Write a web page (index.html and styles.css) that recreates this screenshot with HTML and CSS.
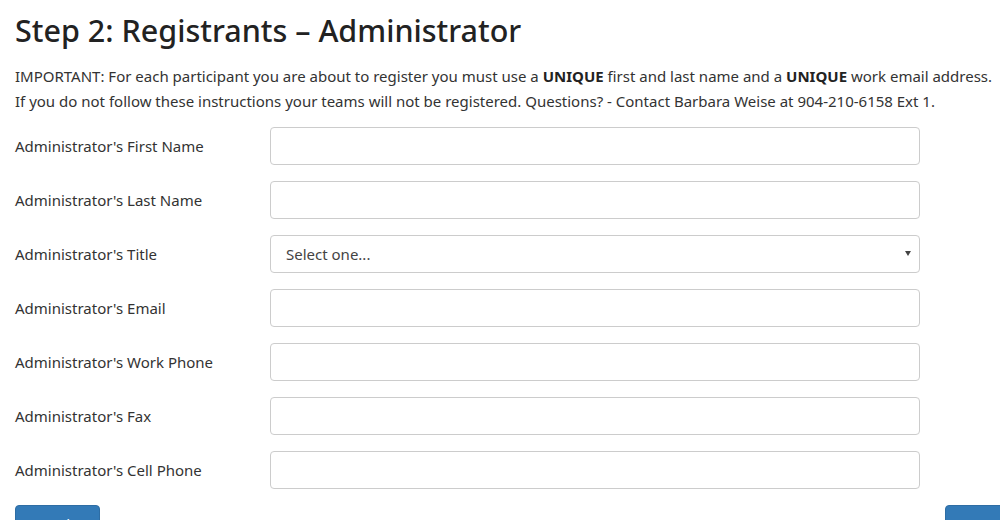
FILE: index.html
```html
<!DOCTYPE html>
<html>
<head>
<meta charset="utf-8">
<link rel="stylesheet" href="styles.css">
</head>
<body>
<div class="page">
  <h1 class="title">Step 2: Registrants – Administrator</h1>
  <p class="notice">IMPORTANT: For each participant you are about to register you must use a <b>UNIQUE</b> first and last name and a <b>UNIQUE</b> work email address. If you do not follow these instructions your teams will not be registered. Questions? - Contact Barbara Weise at 904-210-6158 Ext 1.</p>
  <form class="form">
    <div class="row"><label class="label">Administrator's First Name</label><input class="control" type="text"></div>
    <div class="row"><label class="label">Administrator's Last Name</label><input class="control" type="text"></div>
    <div class="row"><label class="label">Administrator's Title</label>
      <div class="control select"><span>Select one...</span><span class="caret"></span></div></div>
    <div class="row"><label class="label">Administrator's Email</label><input class="control" type="text"></div>
    <div class="row"><label class="label">Administrator's Work Phone</label><input class="control" type="text"></div>
    <div class="row"><label class="label">Administrator's Fax</label><input class="control" type="text"></div>
    <div class="row"><label class="label">Administrator's Cell Phone</label><input class="control" type="text"></div>
    <div class="actions">
      <button type="button" class="btn">Back</button>
      <button type="button" class="btn next">Next</button>
    </div>
  </form>
</div>
</body>
</html>
```
FILE: styles.css
```css
html, body {
  margin: 0;
  padding: 0;
  background: #fff;
  overflow: hidden;
}
body {
  font-family: "Noto Sans", "Open Sans", sans-serif;
  color: #333;
  font-size: 15px;
}
.page {
  padding: 0 15px;
  width: 1030px;
}
.title {
  font-size: 30.5px;
  font-weight: 500;
  margin: 10px 0 14px;
  line-height: 40px;
  color: #222;
}
.notice {
  margin: 0 0 13px;
  line-height: 25px;
  width: 990px;
}
.notice b { font-weight: 700; color: #222; }
.form {
  display: flex;
  flex-direction: column;
  gap: 16px;
}
.row {
  display: flex;
  align-items: center;
  height: 38px;
}
.label {
  width: 255px;
  flex: none;
}
.control {
  width: 650px;
  height: 38px;
  box-sizing: border-box;
  border: 1px solid #ccc;
  border-radius: 4px;
  font: inherit;
  padding: 0 15px;
  background: #fff;
}
.select {
  display: flex;
  align-items: center;
  justify-content: space-between;
  color: #444;
  padding-right: 8px;
}
.caret {
  width: 0;
  height: 0;
  border-left: 3px solid transparent;
  border-right: 3px solid transparent;
  border-top: 5px solid #444;
  margin-top: -2px;
}
.actions {
  display: flex;
  justify-content: space-between;
  width: 1015px;
}
.btn {
  background: #337ab7;
  border: 1px solid #2e6da4;
  color: #fff;
  border-radius: 4px;
  font: inherit;
  width: 85px;
  height: 38px;
  padding: 0;
}
```
